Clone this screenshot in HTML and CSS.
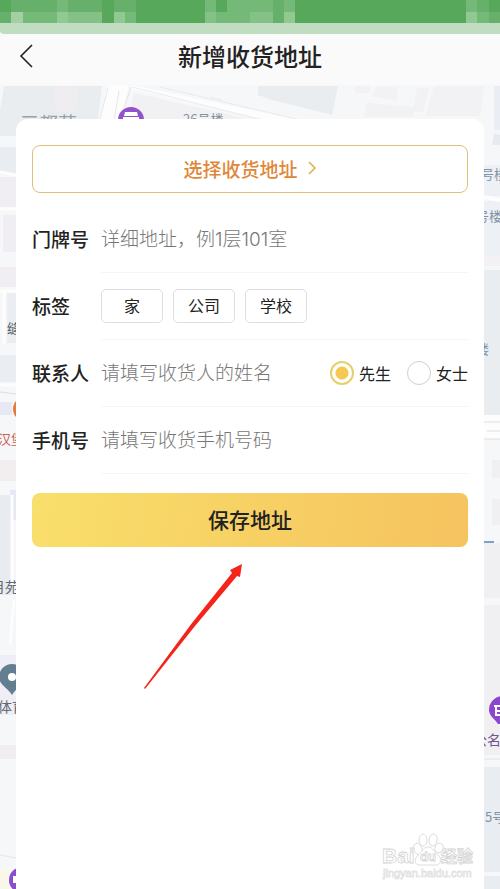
FILE: index.html
```html
<!DOCTYPE html>
<html lang="zh-CN">
<head>
<meta charset="utf-8">
<meta name="viewport" content="width=device-width, initial-scale=1">
<title>新增收货地址</title>
<link rel="stylesheet" href="styles.css">
</head>
<body>
<div class="status">
  <svg class="mosaic" viewBox="0 0 44 2" preserveAspectRatio="none" shape-rendering="crispEdges" aria-hidden="true">
    <path fill="#58a85c" d="M0 0h44v2H0z"/>
    <path fill="#67b06b" d="M1 0h4v1H1zM6 0h3v1H6zM10 0h2v1h-2zM24 0h1v1h-1zM42 0h1v1h-1zM0 1h1v1H0zM24 1h1v1h-1zM43 1h1v1h-1z"/>
    <path fill="#75b979" d="M5 0h1v1H5zM18 0h1v1h-1zM20 0h4v1h-4zM25 0h1v1h-1zM41 0h1v1h-1zM2 1h3v1H2zM11 1h1v1h-1zM19 1h3v1h-3zM42 1h1v1h-1z"/>
    <path fill="#83c186" d="M6 1h3v1H6zM18 1h1v1h-1zM22 1h2v1h-2z"/>
    <path fill="#90c992" d="M5 1h1v1H5zM10 1h1v1h-1zM25 1h1v1h-1zM41 1h1v1h-1z"/>
    <path fill="#a2d0a2" d="M1 1h1v1H1z"/>
  </svg>
</div>
<header class="header">
  <button class="back" type="button" aria-label="返回">
    <svg width="14" height="24" viewBox="0 0 14 24" fill="none" stroke="#222" stroke-width="1.6"><path d="M13 1 2 12l11 11"/></svg>
  </button>
  <h1 class="title">新增收货地址</h1>
</header>
<main class="stage">
  <svg class="map" viewBox="0 0 500 804" preserveAspectRatio="xMidYMin slice" aria-hidden="true">
    <path fill="#f6f7f9" d="M0 0h500v804H0z"/>
    <g opacity=".8">
    <path fill="#e8ebef" d="M4 1h98l-6 50H0V26z"/>
    <path fill="#efebef" d="M55 1h22v25H55z"/>
    <path fill="#fff" d="M107 0h22l-9 40H98z"/>
    <path fill="none" stroke="#dfe2e5" d="M108 2 99 38M119 6l-5 30M131 2l-8 24"/>
    <path fill="#f0f0f3" d="m134 8 110 25v6H128z"/>
    <path fill="#fff" d="m132 0 168 35h-32L131 4z"/>
    <path fill="none" stroke="#e6e9eb" d="m160 2 140 33M132 2l130 33M210 12l12 3"/>
    <path fill="#e7ebef" d="M258 1h80l-6 29-60-15-14-5z"/>
    <path fill="#f2f0f3" d="M354 1h16v7h-14zM376 2h22l-2 14-24-5zM367 18l47 4v10h-50zM417 3h12l-6 24h-10zM434 1h50l-4 30h-54z"/>
    <path fill="#e8edf3" d="M494 1h6v44h-6z"/>
    <path fill="#e7eaef" d="M0 62h16v27L0 87z"/>
    <path fill="#f0edf2" d="M0 92h16v30H0zM3 130h13v37H3zM0 182h16v20H0z"/>
    <path fill="none" stroke="#fff" stroke-width="3" d="m0 87 16 3M0 124h16M0 206h16M4 207v52M0 300h16"/>
    <path fill="#e8ebf1" d="M7 208h9v50H7zM0 270h16v27H0z"/>
    <path fill="none" stroke="#d7dcdf" d="m0 307 16 2"/>
    <path fill="#e5e5f4" d="M0 317h12v13H0zM10 405h6v30h-6z"/>
    <path fill="#f2edee" d="M0 375h16v21H0z"/>
    <path fill="#e5e9ee" d="M0 410h12v100H0z"/>
    <path fill="none" stroke="#fff" stroke-width="3" d="M12 410v90M14 515l-4 45"/>
    <path fill="#eeecf6" d="M0 570h16v60H0z"/>
    <path fill="#f7f8f8" d="M0 635h16v130H0z"/>
    <path fill="#f1edef" d="M0 660h16v14H0z"/>
    <path fill="none" stroke="#e2e2e2" d="m0 770 16 3"/>
    <path fill="#f9f7e7" d="M0 785h16v19H0z"/>
    <path fill="#e4e9ee" d="m494 48 6 2v10h-8z"/>
    <path fill="#eceff3" d="M484 80h16v31h-16zM484 116h16v55h-16z"/>
    <path fill="#f3f0f2" d="M484 171h16v10h-16z"/>
    <path fill="#e6ebef" d="M484 185h16v145h-16z"/>
    <path fill="#fff" d="m484 110 16 3v4l-16-3zM484 330h16v24h-16z"/>
    <path fill="none" stroke="#d7d9dc" d="M484 337h16M484 354h16M487 346h13"/>
    <path fill="#efeff1" d="M492 375h8v18h-8zM492 414h8v26h-8zM484 458h16v55h-16zM484 520h16v150h-16z"/>
    <path fill="#e6eaf0" d="M484 682h16v105h-16zM484 791h16v13h-16z"/>
    <path stroke="#ddd" d="M484 674h16"/>
    </g>
    <path stroke="#7da0cc" stroke-width="2" d="M484 457h10"/>
    <circle cx="131" cy="35" r="13" fill="#9252cb"/>
    <path fill="#fff" d="M125 27h12l1 4h-14zM123 32h16v2h-16z"/>
    <circle cx="25" cy="324" r="12" fill="#e57b3e"/>
    <path fill="#647e91" d="M12 579a13 13 0 0 0-13 13c0 8 9 11 13 18 4-7 13-10 13-18a13 13 0 0 0-13-13z"/>
    <circle cx="12" cy="592" r="4" fill="#fff"/>
    <path fill="#8c46cd" d="M503 611a14 14 0 0 0-14 14c0 6 6 9 9 14h6v-28z"/>
    <path fill="none" stroke="#fff" stroke-width="2" d="M494 621h9M496 621v9h7M496 626h7"/>
    <circle cx="22" cy="795" r="13" fill="#8d4bcf"/>
    <path fill="#fff" d="M13 791h5v7h-5z"/>
    <g class="map-text">
      <text x="20" y="46" font-size="19" fill="#96a2ac">三都苑</text>
      <text x="183" y="39" fill="#84939e">26号楼</text>
      <text x="481" y="94">号楼</text>
      <text x="476" y="136">号楼</text>
      <text x="476" y="269">楼</text>
      <text x="7" y="248" fill="#555c65">缝</text>
      <text x="-2" y="359" fill="#ca6150">汉堡</text>
      <text x="-9" y="507" font-size="14" fill="#606871">月苑</text>
      <text x="-2" y="627" font-size="14" fill="#606871">体育</text>
      <text x="473" y="660" font-size="14" fill="#77538d">公名</text>
      <text x="485" y="737">5号</text>
    </g>
  </svg>
  <form class="card">
    <button class="pick" type="button">选择收货地址
      <svg width="9" height="14" viewBox="0 0 9 14" fill="none" stroke="#dfb24b" stroke-width="1.6"><path d="m1 1 6 6-6 6"/></svg>
    </button>
    <div class="rows">
      <div class="row">
        <label class="label" for="door">门牌号</label>
        <div class="field"><input class="text" id="door" type="text" placeholder="详细地址，例1层101室"></div>
      </div>
      <div class="row">
        <span class="label" id="tag-label">标签</span>
        <div class="field tags" role="group" aria-labelledby="tag-label">
          <button class="tag" type="button">家</button>
          <button class="tag" type="button">公司</button>
          <button class="tag" type="button">学校</button>
        </div>
      </div>
      <div class="row">
        <label class="label" for="person">联系人</label>
        <div class="field people">
          <input class="text" id="person" type="text" placeholder="请填写收货人的姓名">
          <label class="choice"><input class="radio" type="radio" name="gender" checked>先生</label>
          <label class="choice"><input class="radio" type="radio" name="gender">女士</label>
        </div>
      </div>
      <div class="row">
        <label class="label" for="phone">手机号</label>
        <div class="field"><input class="text" id="phone" type="tel" placeholder="请填写收货手机号码"></div>
      </div>
    </div>
    <button class="save" type="button">保存地址</button>
    <svg class="arrow" width="102" height="128" viewBox="0 0 102 128" aria-hidden="true">
      <path fill="#f4241b" d="M0 125 48 60 88 10l-2-3L98 1l-2 13-3-1L51 63 1 126z"/>
    </svg>
  </form>
  <svg class="watermark" width="96" height="52" viewBox="0 0 96 52" aria-hidden="true">
    <g fill="#fff" stroke="#d4d4d4" stroke-width=".8">
      <ellipse cx="38" cy="19" rx="4" ry="6" transform="rotate(-20 38 19)"/>
      <ellipse cx="43" cy="10" rx="4" ry="6"/>
      <ellipse cx="53" cy="10" rx="4" ry="6" transform="rotate(10 53 10)"/>
      <ellipse cx="59" cy="18" rx="4" ry="5" transform="rotate(30 59 18)"/>
      <path d="M48 17c5 0 6 5 10 8 5 5 2 11-4 10H41c-6 1-8-5-3-10 4-3 5-8 10-8z"/>
      <g class="mark-text">
        <text x="2" y="33" font-size="21">Bai</text>
        <text x="40" y="31" font-size="13">du</text>
        <text x="61" y="32" font-size="16">经验</text>
      </g>
    </g>
    <text class="mark-url" x="3" y="47" font-size="11" fill="#fff" stroke="#e2e2e2" stroke-width=".8">jingyan.baidu.com</text>
  </svg>
</main>
</body>
</html>
```
FILE: styles.css
```css
* { box-sizing: border-box; }

body {
  margin: 0;
  min-height: 100vh;
  display: flex;
  flex-direction: column;
  background: #fafafa;
  color: #222;
  font-family: "Noto Sans CJK SC", sans-serif;
}

button, input { font: inherit; color: inherit; }
button { padding: 0; cursor: pointer; }

.status {
  background: #c1ddc1;
  padding-bottom: 11px;
  border-bottom-left-radius: 4px;
}

.mosaic { display: block; width: 100%; height: 23px; }

.header {
  display: grid;
  grid-template-columns: 40px 1fr 40px;
  align-items: center;
  height: 51px;
  padding-bottom: 8px;
}

.back {
  display: flex;
  justify-content: flex-end;
  padding-right: 7px;
  border: 0;
  background: none;
}

.title {
  margin: 0;
  text-align: center;
  font-size: 24px;
  line-height: 32px;
  font-weight: 500;
}

.stage {
  position: relative;
  flex: 1;
  display: flex;
  padding: 34px 16px 0;
  overflow: hidden;
}

.map {
  position: absolute;
  top: 0;
  left: 0;
  width: 100%;
  height: 100%;
}

.map-text { font-size: 13px; fill: #7d93a6; }

.card {
  position: relative;
  flex: 1;
  min-width: 0;
  padding: 26px 16px;
  border-radius: 12px 12px 0 0;
  background: #fff;
}

.pick {
  display: flex;
  align-items: center;
  justify-content: center;
  gap: 10px;
  width: 100%;
  height: 48px;
  padding-bottom: 2px;
  border: 1px solid #dfc07a;
  border-radius: 8px;
  background: #fff;
  color: #e0883a;
  font-size: 19px;
  font-weight: 500;
}

.rows { margin: 13px 0 19px; }

.row { display: flex; align-items: center; }

.label {
  flex: none;
  width: 69px;
  padding-bottom: 2px;
  font-size: 19px;
  font-weight: 500;
}

.field {
  flex: 1;
  min-width: 0;
  display: flex;
  align-items: center;
  height: 67px;
  border-bottom: 1px solid #f5f5f5;
}

.text {
  flex: 1;
  width: 0;
  min-width: 0;
  height: 40px;
  padding: 0;
  border: 0;
  outline: 0;
  background: none;
  font-family: Inter, "Noto Sans CJK SC", sans-serif;
  font-size: 19px;
  font-weight: 300;
}

.text::placeholder { color: #777; opacity: 1; }

.tags { gap: 10px; }

.tag {
  width: 62px;
  height: 34px;
  padding-bottom: 2px;
  border: 1px solid #dedede;
  border-radius: 5px;
  background: #fff;
  font-size: 16px;
}

.people { gap: 16px; }

.choice {
  flex: none;
  display: flex;
  align-items: center;
  gap: 5px;
  font-size: 16px;
}

.radio {
  appearance: none;
  width: 24px;
  height: 24px;
  margin: 0;
  border: 1px solid #cfcfcf;
  border-radius: 50%;
  background: #fff;
}

.radio:checked {
  border: 2px solid #e6d06a;
  background: radial-gradient(circle, #f5c951 6px, #fff 7px);
}

.save {
  display: block;
  width: 100%;
  height: 54px;
  padding-bottom: 2px;
  border: 0;
  border-radius: 8px;
  background: linear-gradient(100deg, #f9df6c, #f7d264 45%, #f6c360);
  font-size: 21px;
  font-weight: 500;
}

.arrow { display: block; margin: 16px 0 0 112px; }

.watermark { position: absolute; right: 24px; bottom: 7px; }

.mark-text {
  font-family: "Liberation Sans", "Noto Sans CJK SC", sans-serif;
  font-weight: 700;
}

.mark-url { font-family: "Liberation Sans", sans-serif; }
```
